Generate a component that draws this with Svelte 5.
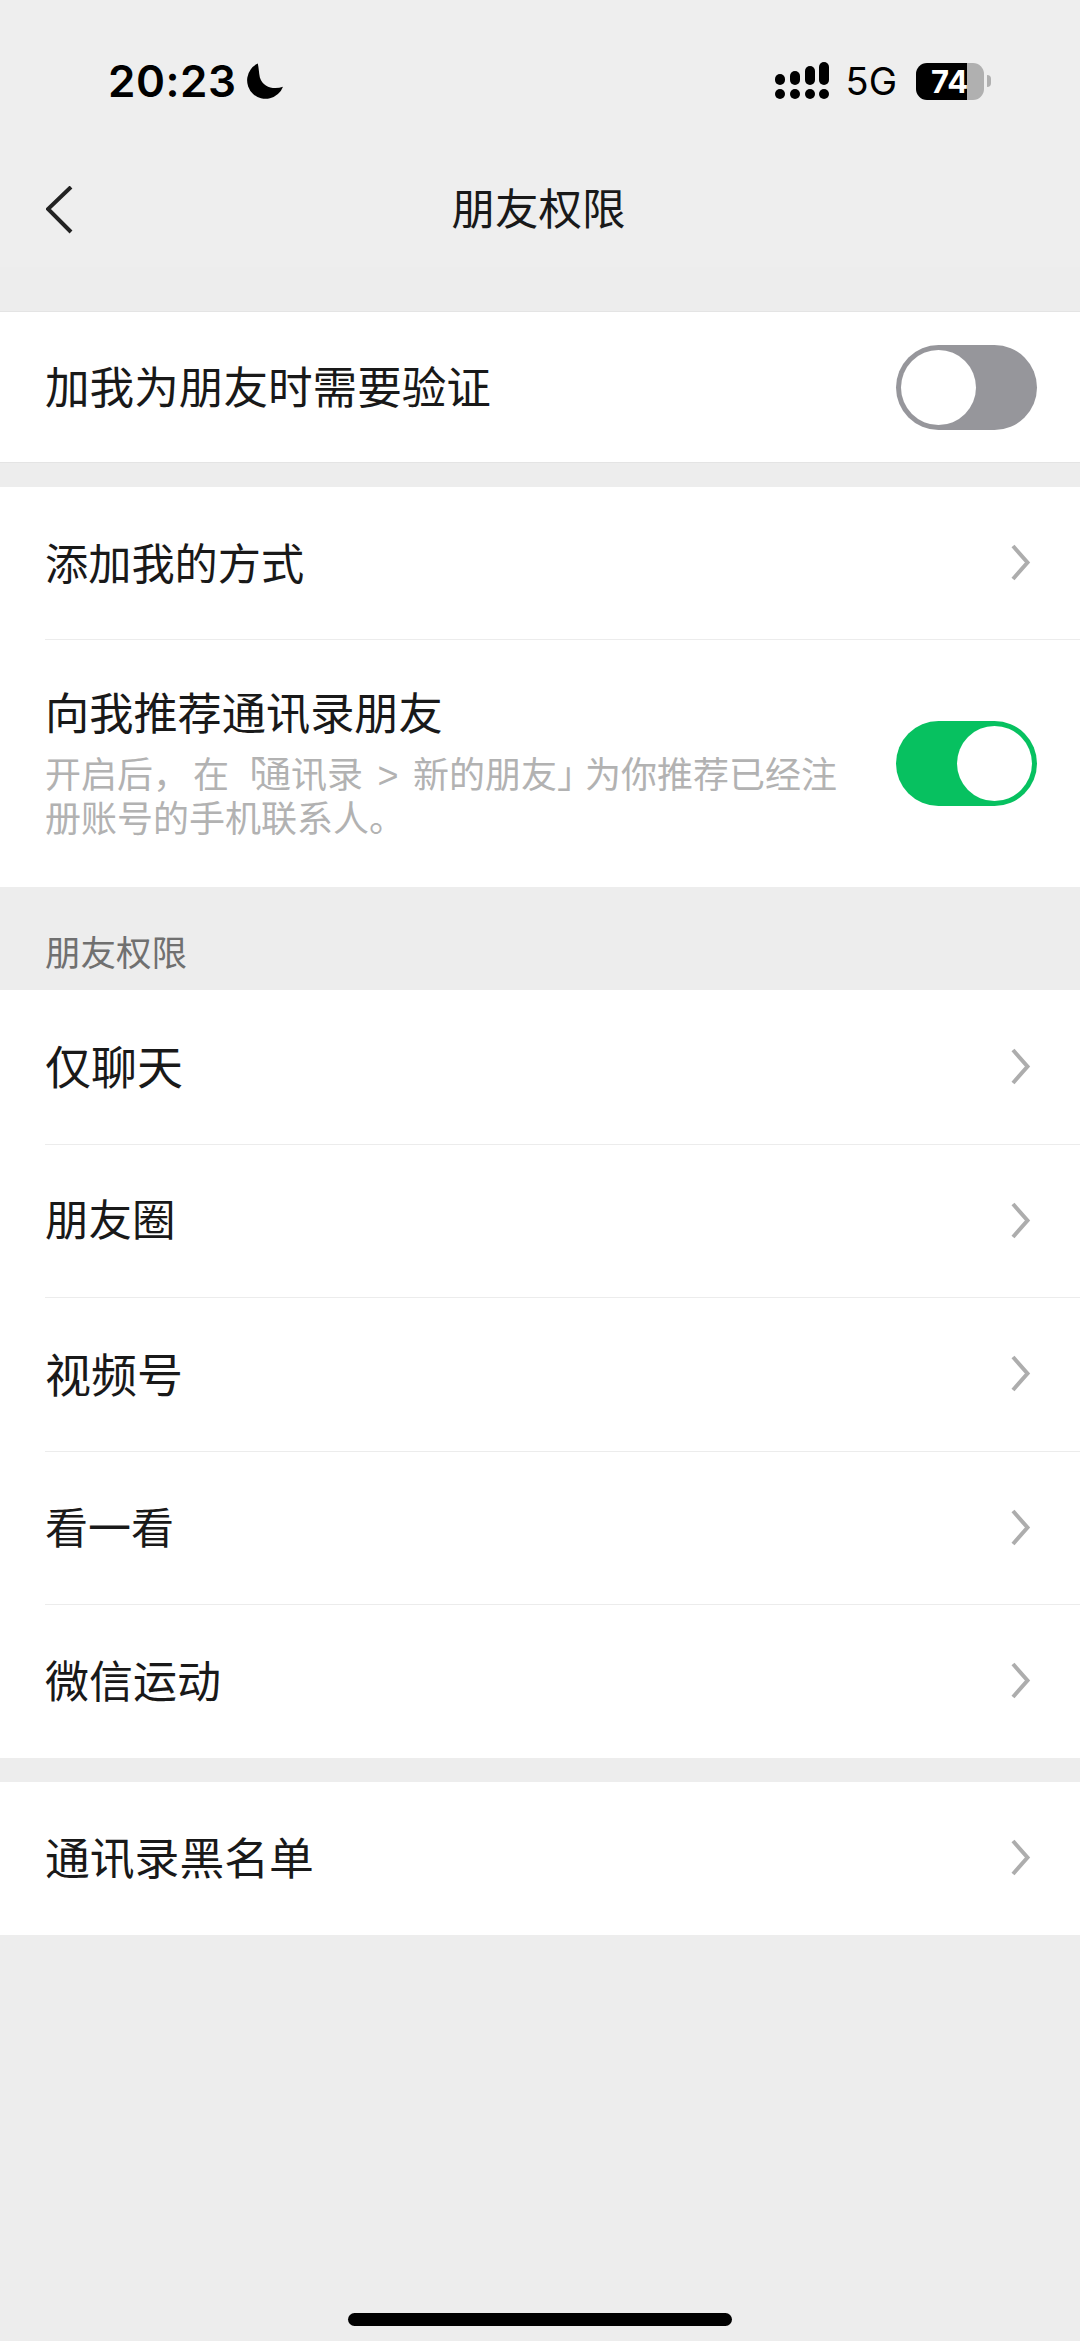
<script lang="ts">
  // label sizes differ slightly row to row in the reference
  const friendRows = [
    { label: '仅聊天', size: 46 },
    { label: '朋友圈', size: 43.5 },
    { label: '视频号', size: 46 },
    { label: '看一看', size: 43 },
    { label: '微信运动', size: 44 }
  ];
</script>

{#snippet chevron()}
  <svg class="chevron" width="24" height="38" viewBox="0 0 24 38" fill="none" stroke="#adadad" stroke-width="4">
    <polyline points="6,2 20.500,18.500 6,35" />
  </svg>
{/snippet}

<div class="page">
  <header class="top">
    <div class="status">
      <div class="status-left">
        <span class="time">20:23</span>
        <svg width="38" height="37" viewBox="0 0 36 36" fill="#000">
          <path d="M11 0.500 A18 18 0 1 0 35.500 23 C27 26 16 24 13 14 C12 9 12 5 11 0.500 Z" />
        </svg>
      </div>
      <div class="status-right">
        <svg width="56" height="38" viewBox="0 0 56 38" fill="#000">
          <rect x="0" y="27" width="10" height="10" rx="5" />
          <rect x="15" y="27" width="10" height="10" rx="5" />
          <rect x="30" y="27" width="10" height="10" rx="5" />
          <rect x="44" y="27" width="10" height="10" rx="5" />
          <rect x="0" y="12" width="10" height="11" rx="5" />
          <rect x="15" y="9" width="10" height="14" rx="5" />
          <rect x="30" y="4" width="10" height="19" rx="5" />
          <rect x="44" y="0" width="10" height="23" rx="5" />
        </svg>
        <span class="net">5G</span>
        <div class="battery">
          <div class="battery-body">
            <span class="battery-level">74</span>
          </div>
          <span class="battery-nub"></span>
        </div>
      </div>
    </div>
    <nav class="nav">
      <svg class="back" width="28" height="48" viewBox="0 0 28 48" fill="none" stroke="#222" stroke-width="4">
        <polyline points="25,1 2,23 25,46" />
      </svg>
      <h1>朋友权限</h1>
    </nav>
  </header>

  <section class="group first">
    <div class="row">
      <span class="label" style="font-size: 44.6px">加我为朋友时需要验证</span>
      <div class="switch"><span class="knob"></span></div>
    </div>
  </section>

  <section class="group">
    <div class="row short">
      <span class="label" style="font-size: 43.2px">添加我的方式</span>
      {@render chevron()}
    </div>
    <div class="row tall">
      <div class="copy">
        <span class="label">向我推荐通讯录朋友</span>
        <p>开启后<span class="comma">，</span>在<span class="open">「</span>通讯录 &gt; 新的朋友<span class="close">」</span>为你推荐已经注</p>
        <p>册账号的手机联系人。</p>
      </div>
      <div class="switch on"><span class="knob"></span></div>
    </div>
  </section>

  <div class="section-title">朋友权限</div>

  <section class="group flush">
    {#each friendRows as row}
      <div class="row">
        <span class="label" style="font-size: {row.size}px">{row.label}</span>
        {@render chevron()}
      </div>
    {/each}
  </section>

  <section class="group">
    <div class="row">
      <span class="label" style="font-size: 44.8px">通讯录黑名单</span>
      {@render chevron()}
    </div>
  </section>

  <div class="home-bar"></div>
</div>

<style>
  :global(body) {
    margin: 0;
    background: #ededed;
  }

  .page {
    height: 2341px;
    display: flex;
    flex-direction: column;
    overflow: hidden;
    background: #ededed;
    color: #191919;
    font-family: "Noto Sans CJK SC", "Liberation Sans", sans-serif;
  }

  .top {
    height: 267px;
    background: #eeeeee;
  }

  .status {
    height: 162px;
    box-sizing: border-box;
    padding: 62px 89px 0 108px;
    display: flex;
    justify-content: space-between;
    align-items: flex-start;
  }

  .status-left {
    display: flex;
    align-items: center;
    gap: 10px;
    color: #000;
  }

  .time {
    font-family: Inter, sans-serif;
    font-size: 44px;
    font-weight: 600;
    line-height: 38px;
    letter-spacing: 0.500px;
  }

  .status-right {
    display: flex;
    align-items: center;
    color: #000;
  }

  .net {
    margin-left: 15px;
    font-family: Inter, sans-serif;
    font-size: 38px;
    line-height: 38px;
  }

  .battery {
    margin-left: 19px;
    display: flex;
    align-items: center;
    gap: 3px;
  }

  .battery-body {
    width: 68px;
    height: 37px;
    border-radius: 11px;
    overflow: hidden;
    background: linear-gradient(to right, #000 51px, #b0b0b0 51px);
  }

  .battery-level {
    display: block;
    padding-left: 15px;
    color: #fff;
    font-family: Inter, sans-serif;
    font-size: 31px;
    font-weight: 700;
    line-height: 37px;
  }

  .battery-nub {
    width: 4px;
    height: 12px;
    border-radius: 0 6px 6px 0;
    background: #b0b0b0;
  }

  .nav {
    height: 105px;
    position: relative;
    display: flex;
    justify-content: center;
    align-items: flex-start;
  }

  .back {
    position: absolute;
    left: 46px;
    top: 24px;
  }

  h1 {
    margin: 0 3px 0 0;
    padding-top: 15px;
    font-size: 43.500px;
    font-weight: 400;
    line-height: 60px;
  }

  .group {
    margin-top: 24px;
    background: #fff;
  }

  .group.first {
    margin-top: 44px;
    border-top: 1px solid #e4e4e4;
    border-bottom: 1px solid #e4e4e4;
  }

  .group.flush {
    margin-top: 0;
  }

  .row {
    height: 153.500px;
    box-sizing: border-box;
    margin-left: 45px;
    padding-right: 43px;
    display: flex;
    justify-content: space-between;
    align-items: center;
    border-top: 1px solid #ececec;
  }

  .row:first-child {
    border-top: 0;
  }

  .first .row {
    height: 150px;
  }

  .row.short {
    height: 152px;
  }

  .row.tall {
    height: 248px;
  }

  .label {
    font-size: 44px;
    line-height: 60px;
    margin-bottom: 5px;
  }

  .copy {
    width: 800px;
    padding-bottom: 5px;
    display: flex;
    flex-direction: column;
  }

  .copy .label {
    margin-bottom: 13px;
    font-size: 44.200px;
  }

  .copy p {
    margin: 0;
    color: #b2b2b2;
    font-family: "Liberation Sans", "Noto Sans CJK SC", sans-serif;
    font-size: 36px;
    line-height: 43.500px;
    word-spacing: 4.500px;
  }

  .comma {
    letter-spacing: 4px;
  }

  .open {
    letter-spacing: -10px;
  }

  .close {
    letter-spacing: -8px;
  }

  .chevron {
    margin-right: 6px;
  }

  .switch {
    width: 141px;
    height: 85px;
    box-sizing: border-box;
    padding: 5px;
    border-radius: 43px;
    background: #96969b;
    display: flex;
  }

  .switch.on {
    background: #07c160;
    justify-content: flex-end;
  }

  .knob {
    width: 75px;
    height: 75px;
    border-radius: 50%;
    background: #fff;
  }

  .section-title {
    height: 103px;
    box-sizing: border-box;
    padding: 40px 0 0 45px;
    color: #707070;
    font-size: 35.500px;
    line-height: 48px;
  }

  .home-bar {
    width: 384px;
    height: 13px;
    margin: auto auto 15px;
    border-radius: 7px;
    background: #000;
  }
</style>
